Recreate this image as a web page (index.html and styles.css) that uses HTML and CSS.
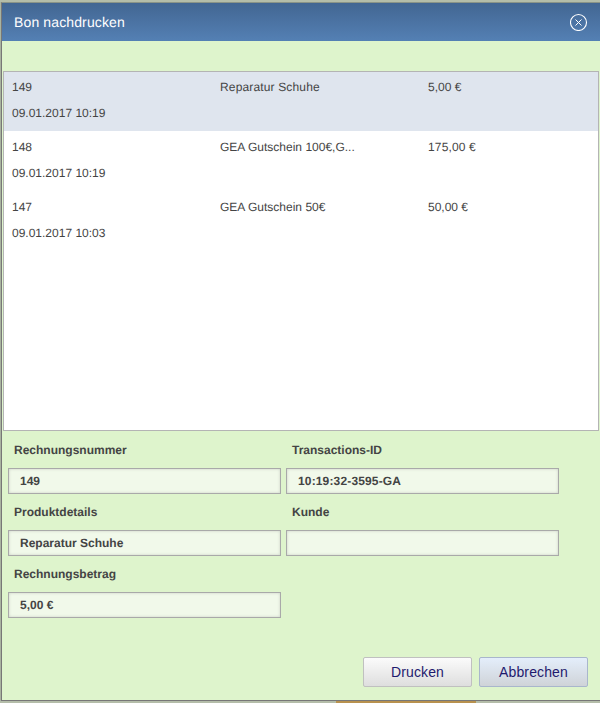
FILE: index.html
```html
<!DOCTYPE html>
<html lang="de">
<head>
<meta charset="utf-8">
<title>Bon nachdrucken</title>
<link rel="stylesheet" href="styles.css">
</head>
<body>
<div class="backdrop-top"></div>
<div class="dialog">
  <header class="titlebar">
    <span class="title">Bon nachdrucken</span>
    <svg class="close" width="18" height="18" viewBox="0 0 18 18" fill="none" stroke="#fff">
      <circle cx="8.5" cy="9.5" r="8" stroke-width="1.1"/>
      <path d="M5.5 6.5l6 6M11.5 6.5l-6 6" stroke-width="1"/>
    </svg>
  </header>
  <div class="list">
    <div class="row selected">
      <div class="cells"><span>149</span><span class="wide">Reparatur Schuhe</span><span>5,00 €</span></div>
      <div class="date">09.01.2017 10:19</div>
    </div>
    <div class="row">
      <div class="cells"><span>148</span><span>GEA Gutschein 100€,G...</span><span class="wide">175,00 €</span></div>
      <div class="date">09.01.2017 10:19</div>
    </div>
    <div class="row">
      <div class="cells"><span>147</span><span>GEA Gutschein 50€</span><span>50,00 €</span></div>
      <div class="date">09.01.2017 10:03</div>
    </div>
  </div>
  <div class="form">
    <div class="field"><label>Rechnungsnummer</label><div class="input">149</div></div>
    <div class="field"><label>Transactions-ID</label><div class="input wide">10:19:32-3595-GA</div></div>
    <div class="field"><label>Produktdetails</label><div class="input">Reparatur Schuhe</div></div>
    <div class="field"><label>Kunde</label><div class="input"></div></div>
    <div class="field"><label>Rechnungsbetrag</label><div class="input">5,00 €</div></div>
  </div>
  <div class="actions">
    <button class="btn">Drucken</button>
    <button class="btn active">Abbrechen</button>
  </div>
</div>
<div class="backdrop-bottom"><div class="orange"></div></div>
</body>
</html>
```

FILE: styles.css
```css
* { box-sizing: border-box; }
html, body { margin: 0; padding: 0; }
body {
  width: 600px;
  height: 703px;
  overflow: hidden;
  background: #a9b3a0;
  font-family: "Liberation Sans", Arial, sans-serif;
  font-size: 12px;
  color: #444;
  text-rendering: geometricPrecision;
}
.backdrop-top { height: 2px; background: #b4bda9; }
.dialog {
  height: 699px;
  margin-left: 1px;
  background: #def4cc;
  border-left: 1px solid #777;
  border-bottom: 1px solid #777;
  border-top: 1px solid #8a9488;
}
.titlebar {
  height: 38px;
  display: flex;
  align-items: center;
  justify-content: space-between;
  padding: 0 12px;
  background: linear-gradient(#426692, #5480b4);
}
.title { font-size: 14px; letter-spacing: 0.13px; color: #fff; }
.close { display: block; }
.list {
  height: 360px;
  margin: 30px 0 0 1px;
  width: 596px;
  background: #fff;
  border: 1px solid #b4b4b4;
}
.row { height: 60px; padding-top: 3px; }
.row.selected { height: 59px; padding-top: 2px; background: #dfe5ee; }
.cells {
  display: grid;
  grid-template-columns: 208px 208px 1fr;
  padding-left: 8px;
  height: 26px;
  line-height: 26px;
}
.wide { letter-spacing: 0.15px; }
.date { padding-left: 8px; height: 26px; line-height: 26px; }
.form {
  display: grid;
  grid-template-columns: 273px 273px;
  column-gap: 5px;
  padding-left: 6px;
  margin-top: 8px;
}
.field { height: 62px; }
.field label {
  display: block;
  height: 21px;
  line-height: 23px;
  padding-left: 6px;
  font-weight: bold;
  color: #444;
}
.input {
  margin-top: 8px;
  height: 26px;
  line-height: 24px;
  padding-left: 11px;
  font-weight: bold;
  color: #444;
  background: #f1f9ea;
  border: 1px solid #a9a9a9;
  box-shadow: inset 0 0 3px #c9cfc4;
}
.actions {
  display: flex;
  justify-content: flex-end;
  gap: 7px;
  padding-right: 12px;
  margin-top: 32px;
}
.btn {
  width: 109px;
  height: 30px;
  padding: 0;
  font-family: inherit;
  font-size: 14px;
  letter-spacing: 0.12px;
  color: #1f1a6e;
  border: 1px solid #c0c0c0;
  border-radius: 2px;
  background: linear-gradient(#fbfbfb, #dedede);
}
.btn.active {
  border-color: #a9b6cc;
  background: linear-gradient(#e4eefb, #cfd3d8);
}
.backdrop-bottom { height: 2px; position: relative; background: #b4bda9; }
.orange { position: absolute; left: 336px; top: 0; width: 140px; height: 2px; background: #b8914e; }
```
